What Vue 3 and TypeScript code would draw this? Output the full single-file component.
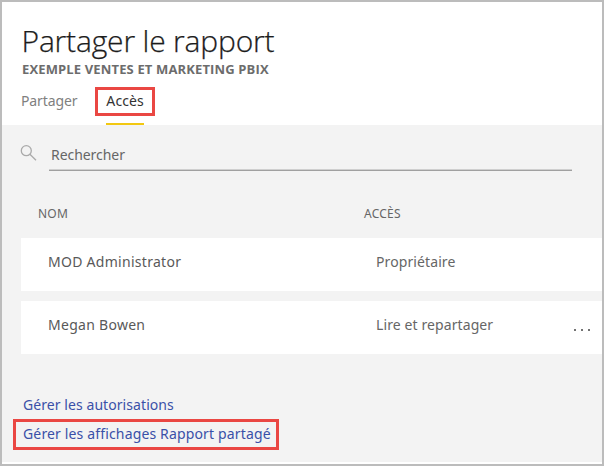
<script setup lang="ts">
interface Member {
  name: string
  access: string
  menu: boolean
}

const members: Member[] = [
  { name: 'MOD Administrator', access: 'Propriétaire', menu: false },
  { name: 'Megan Bowen', access: 'Lire et repartager', menu: true },
]
</script>

<template>
  <main class="panel">
    <header class="head">
      <h1>Partager le rapport</h1>
      <p class="subtitle">EXEMPLE VENTES ET MARKETING PBIX</p>
      <nav class="tabs">
        <a class="tab">Partager</a>
        <a class="tab active">Accès</a>
      </nav>
    </header>
    <section class="body">
      <div class="search">
        <svg class="glass" viewBox="0 0 18 18" width="18" height="18">
          <circle cx="6.3" cy="6.7" r="5" />
          <path d="M9.9 10.3 L16 16.2" />
        </svg>
        <div class="field">Rechercher</div>
      </div>
      <div class="columns">
        <span class="col-name">NOM</span>
        <span class="col-access">ACCÈS</span>
      </div>
      <ul class="rows">
        <li v-for="m in members" :key="m.name" class="row">
          <span class="name">{{ m.name }}</span>
          <span class="access">{{ m.access }}</span>
          <span v-if="m.menu" class="dots"><i /><i /><i /></span>
        </li>
      </ul>
      <footer class="links">
        <a class="link">Gérer les autorisations</a>
        <a class="link marked">Gérer les affichages Rapport partagé</a>
      </footer>
    </section>
  </main>
</template>

<style>
body {
  margin: 0;
  background: #fff;
}
</style>

<style scoped>
.panel {
  box-sizing: border-box;
  width: 604px;
  height: 466px;
  border: 2px solid #bcbcbc;
  padding-bottom: 2px;
  background: #fff;
  display: flex;
  flex-direction: column;
  overflow: hidden;
  font-family: 'Noto Sans', 'Open Sans', sans-serif;
  font-size: 14px;
  color: #666;
  white-space: nowrap;
}
.head {
  box-sizing: border-box;
  height: 123px;
  padding: 18px 0 0 19px;
}
h1 {
  margin: 0;
  padding-left: 0.5px;
  font-family: 'Open Sans', sans-serif;
  font-size: 30px;
  font-weight: 300;
  line-height: 42px;
  height: 40px;
  letter-spacing: -0.17px;
  color: #1c1c1c;
  -webkit-text-stroke: 0.25px #1c1c1c;
}
.subtitle {
  margin: 0;
  padding-left: 1px;
  font-family: 'Open Sans', sans-serif;
  font-size: 13px;
  font-weight: 700;
  line-height: 18px;
  letter-spacing: 0.14px;
  color: #6c6c6c;
}
.tabs {
  display: flex;
  align-items: flex-start;
  padding-top: 9px;
}
.tab {
  box-sizing: border-box;
  height: 29px;
  line-height: 28px;
  letter-spacing: -0.12px;
  color: #808080;
}
.active {
  width: 60px;
  height: 29px;
  margin-left: 18px;
  border: 3px solid #ea4743;
  line-height: 22px;
  padding-left: 8px;
  letter-spacing: 0.1px;
  color: #333;
  position: relative;
}
.active::after {
  content: '';
  position: absolute;
  left: 8px;
  top: 33px;
  width: 38px;
  height: 2px;
  background: #f2c811;
}
.body {
  flex: 1;
  background: #f3f3f3;
}
.search {
  display: flex;
  padding: 19px 0 0 18px;
}
.glass {
  fill: none;
  stroke: #aaa;
  stroke-width: 1.3;
}
.field {
  box-sizing: border-box;
  width: 523px;
  height: 27px;
  margin-left: 11px;
  padding-left: 2px;
  border-bottom: 1px solid #a0a0a0;
  box-shadow: inset 0 -1px #cfcfcf;
  line-height: 21px;
  letter-spacing: -0.05px;
}
.columns {
  display: flex;
  height: 20px;
  margin-top: 33px;
  padding-left: 36px;
  font-size: 12px;
  line-height: 20px;
  letter-spacing: 0.25px;
}
.col-name {
  width: 326px;
}
.rows {
  list-style: none;
  margin: 14px 0 0 19px;
  padding: 0;
  display: flex;
  flex-direction: column;
  gap: 10px;
}
.row {
  display: flex;
  height: 53px;
  background: #fff;
  line-height: 48px;
}
.name {
  width: 328px;
  padding-left: 27px;
  letter-spacing: 0.28px;
  color: #595959;
}
.access {
  width: 198px;
  letter-spacing: 0.1px;
}
.dots {
  display: flex;
  gap: 5px;
  padding-top: 28px;
}
.dots i {
  width: 2px;
  height: 2px;
  border-radius: 1px;
  background: #444;
}
.links {
  display: flex;
  flex-direction: column;
  align-items: flex-start;
  padding: 40px 0 0 11px;
  letter-spacing: 0.07px;
  color: #3a50a8;
}
.link {
  padding-left: 10px;
  line-height: 22px;
}
.marked {
  box-sizing: border-box;
  width: 266px;
  height: 31px;
  margin-top: 3px;
  border: 3px solid #ea4743;
  padding-left: 7px;
  line-height: 24px;
  letter-spacing: 0.15px;
}
</style>
